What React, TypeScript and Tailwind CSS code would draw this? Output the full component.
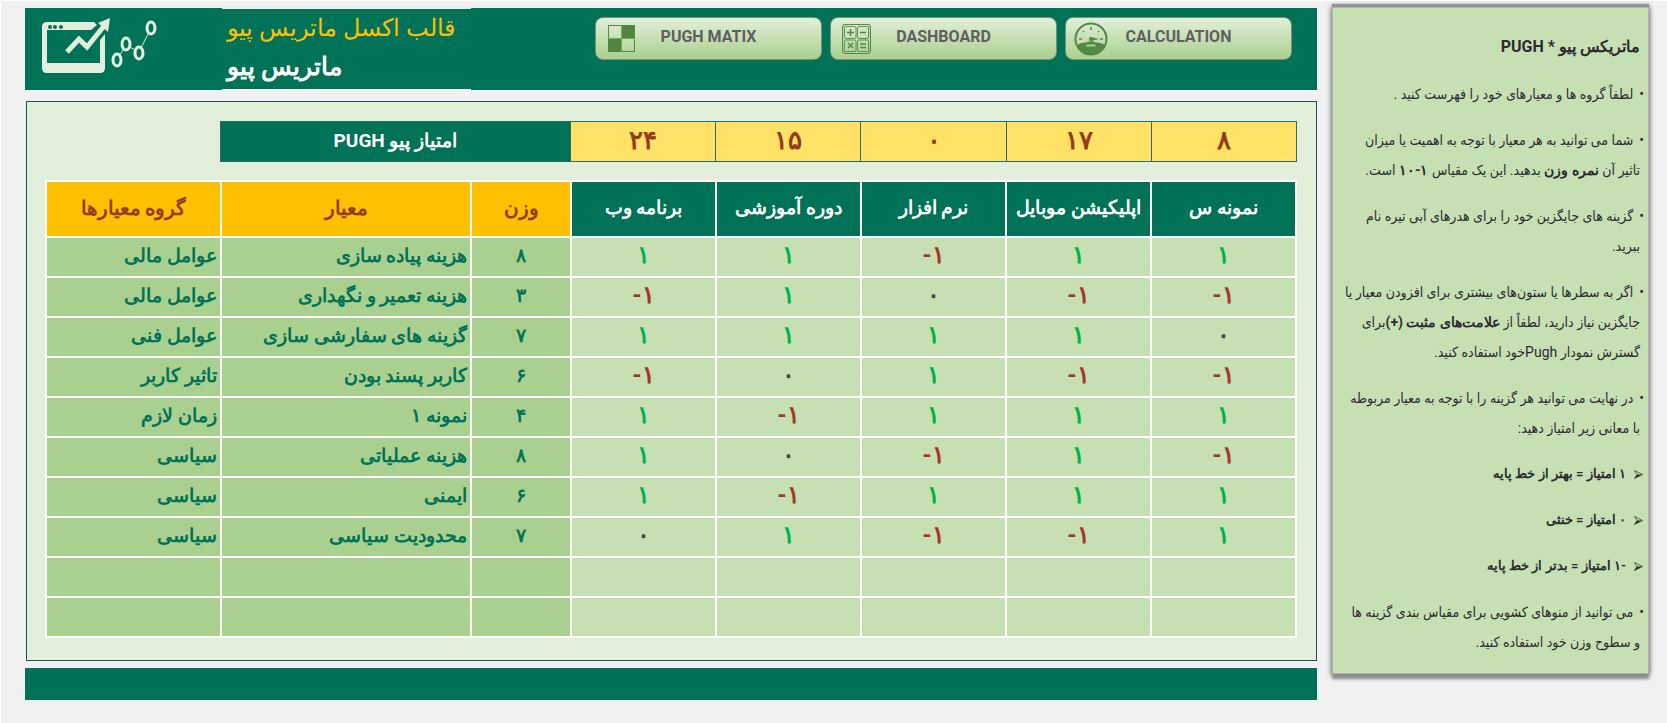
import type { ReactNode } from 'react';
import { clsx } from 'clsx';

type Score = '۱' | '-۱' | '۰';

interface Row {
  group: string;
  criterion: string;
  weight: string;
  scores: Score[];
}

const options = ['برنامه وب', 'دوره آموزشی', 'نرم افزار', 'اپلیکیشن موبایل', 'نمونه س'];
const totals = ['۲۴', '۱۵', '۰', '۱۷', '۸'];

const rows: Row[] = [
  { group: 'عوامل مالی', criterion: 'هزینه پیاده سازی', weight: '۸', scores: ['۱', '۱', '-۱', '۱', '۱'] },
  { group: 'عوامل مالی', criterion: 'هزینه تعمیر و نگهداری', weight: '۳', scores: ['-۱', '۱', '۰', '-۱', '-۱'] },
  { group: 'عوامل فنی', criterion: 'گزینه های سفارشی سازی', weight: '۷', scores: ['۱', '۱', '۱', '۱', '۰'] },
  { group: 'تاثیر کاربر', criterion: 'کاربر پسند بودن', weight: '۶', scores: ['-۱', '۰', '۱', '-۱', '-۱'] },
  { group: 'زمان لازم', criterion: 'نمونه ۱', weight: '۴', scores: ['۱', '-۱', '۱', '۱', '۱'] },
  { group: 'سیاسی', criterion: 'هزینه عملیاتی', weight: '۸', scores: ['۱', '۰', '-۱', '۱', '-۱'] },
  { group: 'سیاسی', criterion: 'ایمنی', weight: '۶', scores: ['۱', '-۱', '۱', '۱', '۱'] },
  { group: 'سیاسی', criterion: 'محدودیت سیاسی', weight: '۷', scores: ['۰', '۱', '-۱', '-۱', '۱'] },
];

const emptyRows = [0, 1];

const scoreColors: Record<Score, string> = {
  '۱': 'text-[#00b050]',
  '-۱': 'text-[#a5352b]',
  '۰': 'text-[#3b4a45]',
};

function Logo() {
  return (
    <svg width="118" height="60" viewBox="0 0 118 60" fill="none" aria-hidden="true">
      <path
        fill="#e2efda"
        fillRule="evenodd"
        d="M5 4H52L55 7L49 12H5V45H58V22L63 16V50Q63 55 58 55H5Q0 55 0 50V9Q0 4 5 4Z"
      />
      <circle cx="8" cy="9" r="2" fill="#007258" />
      <circle cx="13" cy="9" r="2" fill="#007258" />
      <circle cx="19" cy="9" r="2" fill="#007258" />
      <path d="M25 34L37 21L45 29L62 8" stroke="#e2efda" strokeWidth="5" />
      <path d="M68 0L56 5L66 14Z" fill="#e2efda" />
      <path d="M76 40L84 27L97 34L109 10" stroke="#e2efda" strokeWidth="1" />
      <g fill="#007258" stroke="#e2efda" strokeWidth="3">
        <ellipse cx="75" cy="42" rx="4" ry="6" />
        <ellipse cx="84" cy="26" rx="4" ry="6" />
        <ellipse cx="97" cy="35" rx="4" ry="6" />
        <ellipse cx="109" cy="10" rx="4" ry="6" />
      </g>
    </svg>
  );
}

function MatrixIcon() {
  return (
    <svg width="27" height="27" viewBox="0 0 27 27" aria-hidden="true">
      <rect x="0.5" y="0.5" width="26" height="26" fill="none" stroke="#548943" />
      <path d="M14 0H27V13H14ZM0 14H13V27H0Z" fill="#518541" />
      <path d="M13.5 0V27M0 13.5H27" stroke="#70ad47" />
    </svg>
  );
}

function CalculatorIcon() {
  return (
    <svg width="29" height="30" viewBox="0 0 29 30" fill="none" stroke="#548943" aria-hidden="true">
      <rect x="0.5" y="0.5" width="28" height="29" rx="3" strokeWidth="1.2" />
      <g strokeWidth="0.9">
        <rect x="2.5" y="2.5" width="11.5" height="12" rx="1.5" />
        <rect x="15.5" y="2.5" width="11" height="12" rx="1.5" />
        <rect x="2.5" y="16" width="11.5" height="11.5" rx="1.5" />
        <rect x="15.5" y="16" width="11" height="11.5" rx="1.5" />
      </g>
      <path d="M5 8.5H12M8.5 5V12M18 8.5H24M6 19L11 24M11 19L6 24M18 20H24M18 23.5H24" strokeWidth="1.5" />
    </svg>
  );
}

function GaugeIcon() {
  return (
    <svg width="34" height="34" viewBox="0 0 34 34" fill="none" aria-hidden="true">
      <circle cx="17" cy="17" r="15.5" stroke="#548943" strokeWidth="2" />
      <path d="M3 23Q7 20 12 20.500Q17 18 22 20.500Q27 20 31 23A15 15 0 0 1 3 23Z" fill="#548943" />
      <path d="M17 5V8M9 9L10 10M25 9L24 10M5 17H8M26 17H29" stroke="#548943" strokeWidth="1.5" />
      <path d="M17 15L25 17L17 19Z" fill="#548943" />
      <circle cx="17" cy="17" r="2" fill="#548943" />
      <rect x="13" y="23" width="8" height="1" stroke="#a9d08e" />
    </svg>
  );
}

function NavButton({ label, icon }: { label: string; icon: ReactNode }) {
  return (
    <button
      type="button"
      className="flex h-[43px] w-[227px] items-center rounded-lg border border-[#7d9179] bg-linear-to-b from-[#e2efda] to-[#a9d08e] text-base font-bold text-[#5f5f5f]"
    >
      <span className="flex w-[50px] justify-center">{icon}</span>
      <span className="flex-1 pr-[50px] pb-1 text-center whitespace-nowrap">{label}</span>
    </button>
  );
}

function Header() {
  return (
    <header className="flex h-[82px] bg-[#007258]">
      <div className="w-[197px] shrink-0 pt-[10px] pl-[17px]">
        <Logo />
      </div>
      <div className="w-[249px] shrink-0 border-y border-[#f1f1f1] pl-[5px] whitespace-nowrap">
        <p dir="rtl" className="text-left text-[24px] leading-[38px] text-[#ffc000]">قالب اکسل ماتریس پیو</p>
        <h1 dir="rtl" className="text-left text-[25px] leading-[40px] font-bold text-white">ماتریس پیو</h1>
      </div>
      <nav className="mr-[25px] ml-auto flex gap-2 pt-[9px]">
        <NavButton label="PUGH MATIX" icon={<MatrixIcon />} />
        <NavButton label="DASHBOARD" icon={<CalculatorIcon />} />
        <NavButton label="CALCULATION" icon={<GaugeIcon />} />
      </nav>
    </header>
  );
}

// both tables share the same columns so they stay aligned
function Columns() {
  return (
    <colgroup>
      <col className="w-[14%]" />
      <col className="w-[20%]" />
      <col className="w-[8%]" />
      {options.map((option) => (
        <col key={option} className="w-[11.6%]" />
      ))}
    </colgroup>
  );
}

function TotalsTable() {
  return (
    <table className="w-full table-fixed border-collapse">
      <Columns />
      <tbody>
        <tr className="h-10">
          <td />
          <th colSpan={2} dir="rtl" className="border border-[#2f6b66] bg-[#007258] p-0 pb-[2px] text-[19px] leading-6 text-white">
            امتیاز پیو PUGH
          </th>
          {totals.map((total, i) => (
            <td key={i} className="border border-[#2f6b66] bg-[#ffe266] p-0 pb-1 text-center text-[26px] leading-6 font-bold text-[#943c1e]">
              {total}
            </td>
          ))}
        </tr>
      </tbody>
    </table>
  );
}

function MatrixTable() {
  const side = 'border-2 border-white bg-[#a9d08e] p-0 px-[3px] pb-[2px]';
  const main = 'border-2 border-white bg-[#c6e0b4] p-0 pb-1 text-center text-[24px]';

  return (
    <table className="mt-[18px] w-full table-fixed border-collapse text-[19px] leading-6 font-bold whitespace-nowrap">
      <Columns />
      <thead>
        <tr className="h-[56px]">
          {['گروه معیارها', 'معیار', 'وزن'].map((title) => (
            <th key={title} dir="rtl" className="border-2 border-white bg-[#ffc000] p-0 pb-[2px] text-[20px] text-[#943c1e]">
              {title}
            </th>
          ))}
          {options.map((option) => (
            <th key={option} dir="rtl" className="border-2 border-white bg-[#007258] p-0 pb-[2px] text-white">
              {option}
            </th>
          ))}
        </tr>
      </thead>
      <tbody className="text-[#007258]">
        {rows.map((row, i) => (
          <tr key={i} className="h-10">
            <td dir="rtl" className={side}>{row.group}</td>
            <td dir="rtl" className={side}>{row.criterion}</td>
            <td className={clsx(side, 'text-center')}>{row.weight}</td>
            {row.scores.map((score, j) => (
              <td key={j} dir="ltr" className={clsx(main, scoreColors[score])}>{score}</td>
            ))}
          </tr>
        ))}
        {emptyRows.map((n) => (
          <tr key={n} className="h-10">
            <td className={side} />
            <td className={side} />
            <td className={side} />
            {options.map((option) => (
              <td key={option} className={main} />
            ))}
          </tr>
        ))}
      </tbody>
    </table>
  );
}

function Bullet() {
  return <span className="-mr-1 ml-[6px]">•</span>;
}

function Strong({ children }: { children: ReactNode }) {
  return <b className='font-["Roboto","Noto_Sans",sans-serif]'>{children}</b>;
}

function Meaning({ children }: { children: ReactNode }) {
  return (
    <p className='font-["Roboto","Noto_Sans",sans-serif] text-[13px] font-bold'>
      <svg className="-mr-[3px] ml-2 inline" width="9" height="9" viewBox="0 0 9 9" aria-hidden="true">
        <path d="M0.500 0.500L8.500 4.500L0.500 8.500L3 4.500Z" fill="none" stroke="#30302c" strokeWidth="0.700" />
        <path d="M3 4.500H8.500L0.500 8.500Z" fill="#30302c" />
      </svg>
      {children}
    </p>
  );
}

function Help() {
  return (
    <aside
      dir="rtl"
      className='mt-[6px] flex h-[667px] w-[317px] shrink-0 flex-col gap-4 border border-[#b3b3b3] bg-[#c6e0b4] pt-[23px] pr-2 font-["Roboto","DejaVu_Sans_Condensed",sans-serif] text-[14px] leading-[30px] whitespace-nowrap text-[#2b2b30] shadow-[0_-3px_1px_#939393,0_5px_3px_#8c8c8c,0_0_5px_1px_#808080]'
    >
      <h2 className='font-["Roboto","Noto_Sans",sans-serif] text-base leading-[32px] font-bold'>ماتریکس پیو * PUGH</h2>
      <p><Bullet />لطفاً گروه ها و معیارهای خود را فهرست کنید .</p>
      <p>
        <Bullet />شما می توانید به هر معیار با توجه به اهمیت یا میزان
        <br />
        تاثیر آن <Strong>نمره وزن</Strong> بدهید. این یک مقیاس <Strong>۱-۱۰</Strong> است.
      </p>
      <p>
        <Bullet />گزینه های جایگزین خود را برای هدرهای آبی تیره نام
        <br />
        ببرید.
      </p>
      <p>
        <Bullet />اگر به سطرها یا ستون‌های بیشتری برای افزودن معیار یا
        <br />
        جایگزین نیاز دارید، لطفاً از <Strong>علامت‌های مثبت (+)</Strong>برای
        <br />
        گسترش نمودار Pughخود استفاده کنید.
      </p>
      <p>
        <Bullet />در نهایت می توانید هر گزینه را با توجه به معیار مربوطه
        <br />
        با معانی زیر امتیاز دهید:
      </p>
      <Meaning>۱ امتیاز = بهتر از خط پایه</Meaning>
      <Meaning>۰ امتیاز = خنثی</Meaning>
      <Meaning>-۱ امتیاز = بدتر از خط پایه</Meaning>
      <p>
        <Bullet />می توانید از منوهای کشویی برای مقیاس بندی گزینه ها
        <br />
        و سطوح وزن خود استفاده کنید.
      </p>
    </aside>
  );
}

export default function App() {
  return (
    <div className='flex min-h-screen gap-[15px] border-t border-l border-white bg-[#f1f1f1] pr-[18px] pl-6 font-["Roboto","Noto_Sans",sans-serif]'>
      <main className="min-w-0 flex-1 pt-[7px]">
        <Header />
        <section className="mt-[11px] ml-px border border-[#1f4e5f] bg-[#e2efda] pt-[19px] pr-[19px] pb-[22px] pl-[18px]">
          <TotalsTable />
          <MatrixTable />
        </section>
        <footer className="mt-[7px] h-8 bg-[#007258]" />
      </main>
      <Help />
    </div>
  );
}
